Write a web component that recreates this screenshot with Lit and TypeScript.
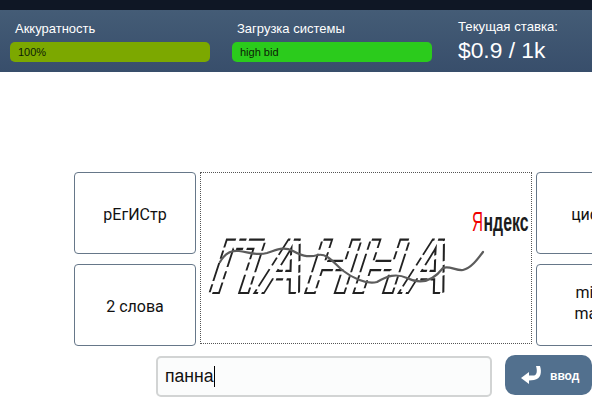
import { LitElement, html, css, svg } from "lit";
import { customElement } from "lit/decorators.js";

const WAVE = "M19 89 C24 80 30 77 38 78 C47 79 55 83 66 80 C76 77 82 73 92 78 C99 82 106 85 117 82 C126 80 133 90 141 97 C150 104 165 112 176 109 C186 103 195 100 206 105 C214 109 228 113 242 95 C248 92 255 98 262 97 C270 95 276 87 282 79";

@customElement("app-root")
export class AppRoot extends LitElement {
  static styles = css`
    :host { display: block; width: 592px; height: 418px; overflow: hidden; background: #fff; font-family: "Liberation Sans", Arial, sans-serif; }
    .strip { height: 10px; background: #0f1725; }
    .header { height: 62px; box-sizing: border-box; background: linear-gradient(#445c76, #384e6b); display: flex; color: #fff; padding-left: 10px; }
    .meter { width: 200px; margin-right: 22px; padding-top: 11px; }
    .meter-label { font-size: 13px; line-height: 15px; height: 21px; padding-left: 5px; }
    .bar { height: 20px; border-radius: 5px; color: #0c1c06; font-size: 11px; line-height: 20px; padding-left: 8px; box-sizing: border-box; }
    .olive { background: #7ca800; }
    .green { background: #2bcb1c; }
    .rate { margin-left: 4px; padding-top: 9px; font-size: 13.2px; line-height: 15px; }
    .rate-value { font-size: 22.8px; line-height: 26px; margin-top: 3px; }
    .stage { display: grid; grid-template-columns: 122px 332px 122px; column-gap: 4px; width: 700px; padding: 100px 0 0 74px; }
    .column { display: flex; flex-direction: column; gap: 10px; }
    .card { height: 82px; box-sizing: border-box; border: 1px solid #667789; border-radius: 4px; padding-top: 3px; display: flex; align-items: center; justify-content: center; text-align: center; font-family: Roboto, sans-serif; font-size: 16px; line-height: 21px; color: #111; }
    .card.stacked { padding-top: 0; padding-bottom: 5px; }
    .captcha { height: 172px; box-sizing: border-box; border: 1px dotted #555; }
    .captcha svg { display: block; }
    .word { font-family: "Liberation Sans", sans-serif; font-weight: 700; font-size: 76px; fill: #fff; stroke: #222; stroke-width: 2.2; stroke-dasharray: 18 4 8 3; }
    .wave { fill: none; stroke: #5c5c5c; stroke-width: 2.2; stroke-linecap: round; }
    .ya-mark { font-family: "Liberation Sans", sans-serif; font-size: 28px; fill: #f00000; }
    .ya-rest { font-family: "Liberation Sans", sans-serif; font-weight: 700; font-size: 26px; fill: #1c1c1c; }
    .entry { display: flex; width: 700px; padding: 10px 0 0 156px; align-items: flex-start; gap: 13px; }
    .field { width: 336px; height: 41px; box-sizing: border-box; border: 2px solid #d2d4d4; border-radius: 5px; background: #fbfcfc; padding-left: 7px; font-size: 17.6px; line-height: 37px; color: #111; display: flex; align-items: center; }
    .caret { width: 1px; height: 21px; background: #000; }
    .go { width: 87px; height: 40px; margin-top: -1px; border-radius: 10px; background: #52708e; color: #fff; display: flex; align-items: center; padding-left: 15px; gap: 8px; box-sizing: border-box; font-size: 12px; font-weight: 700; }
    .go span { padding-top: 2px; }
    .go svg { display: block; }
  `;

  render() {
    return html`
      <div class="strip"></div>
      <div class="header">
        <div class="meter">
          <div class="meter-label">Аккуратность</div>
          <div class="bar olive">100%</div>
        </div>
        <div class="meter">
          <div class="meter-label">Загрузка системы</div>
          <div class="bar green">high bid</div>
        </div>
        <div class="rate">
          <div>Текущая ставка:</div>
          <div class="rate-value">$0.9 / 1k</div>
        </div>
      </div>
      <div class="stage">
        <div class="column">
          <div class="card">рЕгИСтр</div>
          <div class="card">2 слова</div>
        </div>
        <div class="captcha">
          <svg width="330" height="170" viewBox="0 0 330 170">
            ${svg`
              <text class="word" transform="translate(4 120) skewX(-18) scale(1 1.02)" x="0" y="0" textLength="240" lengthAdjust="spacingAndGlyphs">ПАННА</text>
              <path class="wave" d="${WAVE}"/>
              <text class="ya-mark" x="271" y="58" textLength="11" lengthAdjust="spacingAndGlyphs">Я</text>
              <text class="ya-rest" x="282.5" y="58" textLength="45" lengthAdjust="spacingAndGlyphs">ндекс</text>
            `}
          </svg>
        </div>
        <div class="column">
          <div class="card">цифры</div>
          <div class="card stacked">mixed<br />maths</div>
        </div>
      </div>
      <div class="entry">
        <div class="field">панна<span class="caret"></span></div>
        <div class="go">
          <svg width="22" height="21" viewBox="0 0 22 21"><path fill="#fff" d="M1 13 L9 7 L9 10.5 L14 10.5 C17 10 17.5 6 16 1 L20 1 C22 7 21 14 14 15 L9 15.5 L9 19 Z"/></svg>
          <span>ввод</span>
        </div>
      </div>
    `;
  }
}
